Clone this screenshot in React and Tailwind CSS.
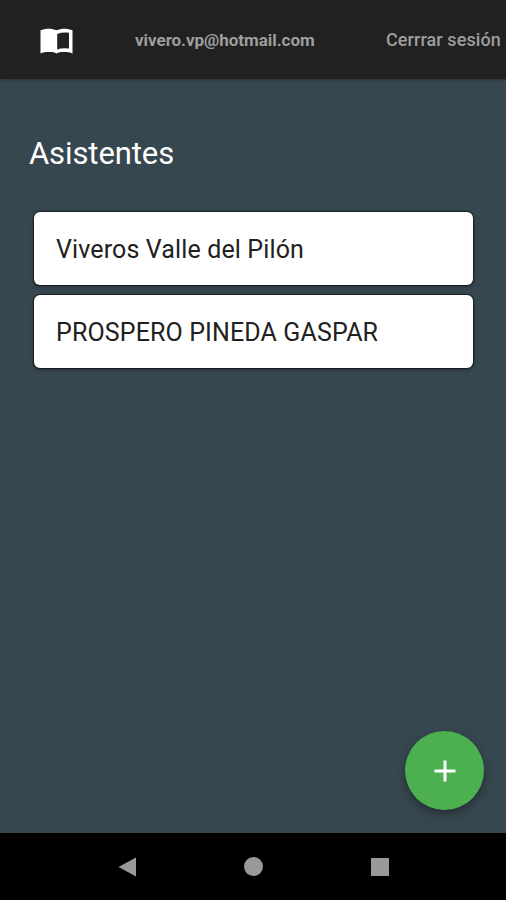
const attendees = [
  { name: "Viveros Valle del Pilón" },
  { name: "PROSPERO PINEDA GASPAR" },
];

function Header() {
  return (
    <header className="flex h-[79px] shrink-0 items-center bg-[#212121] pl-[40px] text-[#9e9e9e] shadow-[0_1px_2px_rgba(0,0,0,0.3)]">
      <svg className="mt-[3px] h-[26px] w-[33px] shrink-0 text-white" viewBox="0 0 33 26" fill="currentColor">
        <path fillRule="evenodd" d="M.5 2.300C5 .2 12 0 16.500 2.300 21 0 28 .2 32.500 2.300V25.500Q30 24 27 24H21Q18.500 24 16.500 25.500 14.500 24 12 24H6Q3 24 .5 25.500ZM17.200 6V21.500Q22 19.500 29 20.500V4.700Q22 4 17.200 6Z" />
      </svg>
      <span className="ml-[62px] w-[180px] whitespace-nowrap pt-[2px] text-[17px] font-bold tracking-[-0.04px]">vivero.vp@hotmail.com</span>
      <span className="ml-[71px] whitespace-nowrap text-[18px] font-medium tracking-[0.08px]">Cerrrar sesión</span>
    </header>
  );
}

export default function App() {
  return (
    <div className="flex h-[900px] w-[506px] flex-col overflow-hidden bg-[#37474f] font-[Roboto,sans-serif]">
      <Header />
      <main className="flex flex-1 flex-col">
        <h1 className="ml-[29px] mt-[55px] text-[31px] leading-[40px] tracking-[-0.1px] text-white">Asistentes</h1>
        <ul className="ml-[34px] mt-[38px] flex w-[439px] flex-col gap-[10px]">
          {attendees.map(({ name }) => (
            <li key={name} className="flex h-[73px] items-center rounded-[6px] bg-white pl-[22px] pt-[2px] text-[25px] tracking-[0.13px] text-[#212121] shadow-[0_0_1px_1px_rgba(0,0,0,0.55),0_2px_4px_rgba(0,0,0,0.3)]">
              {name}
            </li>
          ))}
        </ul>
        <button className="mb-[23px] mr-[22px] mt-auto flex size-[79px] items-center justify-center self-end rounded-full bg-[#4caf50] shadow-[0_4px_8px_rgba(0,0,0,0.35)]">
          <svg className="ml-px h-[36px] w-[36px] text-white" viewBox="0 0 24 24" fill="currentColor">
            <path d="M19 13h-6v6h-2v-6H5v-2h6V5h2v6h6v2z" />
          </svg>
        </button>
      </main>
      <nav className="flex h-[67px] shrink-0 items-center justify-center gap-[107px] bg-black text-[#999]">
        <svg className="h-5 w-5" viewBox="0 0 20 20" fill="currentColor"><path d="M18 .5v19L.5 10z" /></svg>
        <span className="-ml-px size-[19px] rounded-full bg-current" />
        <span className="ml-px size-[18px] bg-current" />
      </nav>
    </div>
  );
}
